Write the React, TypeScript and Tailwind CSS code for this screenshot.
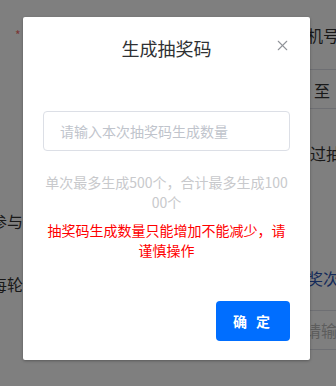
import { X } from 'lucide-react'

const FONT = { fontFamily: '"Noto Sans CJK SC", "Noto Sans", sans-serif' }

export default function App() {
  return (
    <div className="relative w-[336px] h-[386px] overflow-hidden bg-white text-[#333]" style={FONT}>
      {/* page behind the dialog */}
      <div className="flex h-full">
        <div className="w-[40px] shrink-0 flex flex-col text-[16px] leading-5 whitespace-nowrap">
          <span className="mt-[25px] ml-[15px] text-[#f56c6c] text-[12px] leading-5">*</span>
          <span className="mt-[166px] ml-[-9px]">参与抽奖人数</span>
          <span className="mt-[43px] ml-[-9px]">每轮抽奖次数</span>
        </div>
        <div className="flex-1" />
        <div className="w-[41px] shrink-0 flex flex-col text-[16px] leading-5 whitespace-nowrap overflow-hidden">
          <span className="mt-[25px] ml-[12px]">机号码</span>
          <div className="mt-[24px] ml-[15px] border-t border-[#dcdfe6]" />
          <span className="mt-[10px] ml-[19px]">至</span>
          <div className="mt-[8px] ml-[15px] border-t border-[#dcdfe6]" />
          <span className="mt-[34px] ml-[15px]">过抽奖</span>
          <span className="mt-[105px] ml-[12px] text-[#2a54b4]">奖次数</span>
          <div className="mt-[22px] h-[40px] w-[60px] rounded border border-[#dcdfe6] pl-[9px] flex items-center text-[#bbb]">
            请输入
          </div>
        </div>
      </div>

      {/* overlay + dialog */}
      <div className="absolute inset-0 bg-black/50">
        <div className="relative mt-[17px] ml-[23px] w-[287px] h-[343px] bg-white rounded-[2px] shadow-[0_1px_3px_rgba(0,0,0,0.3)] flex flex-col">
          <div className="pt-[19px] text-center text-[18px] leading-6 text-[#303133]">生成抽奖码</div>
          <button className="absolute top-[20px] right-[19px] text-[#909399]">
            <X size={17} strokeWidth={1.5} />
          </button>

          <div className="mt-[51px] mx-5 h-[40px] rounded border border-[#dcdfe6] flex items-center pl-4 text-[14px] text-[#c0c4cc]">
            请输入本次抽奖码生成数量
          </div>

          <p className="mt-[21px] mx-5 text-center text-[14px] leading-5 text-[#c8c9cc] break-all">
            单次最多生成500个，合计最多生成10000个
          </p>
          <p className="mt-[8px] mx-5 text-center text-[14px] leading-5 text-[#ff0000]">
            抽奖码生成数量只能增加不能减少，请谨慎操作
          </p>

          <div className="mt-auto mb-[19px] mr-5 flex justify-end">
            <button className="w-[74px] h-[40px] rounded bg-[#006eff] text-white text-[14px] font-bold tracking-[3px]">
              确 定
            </button>
          </div>
        </div>
      </div>
    </div>
  )
}
